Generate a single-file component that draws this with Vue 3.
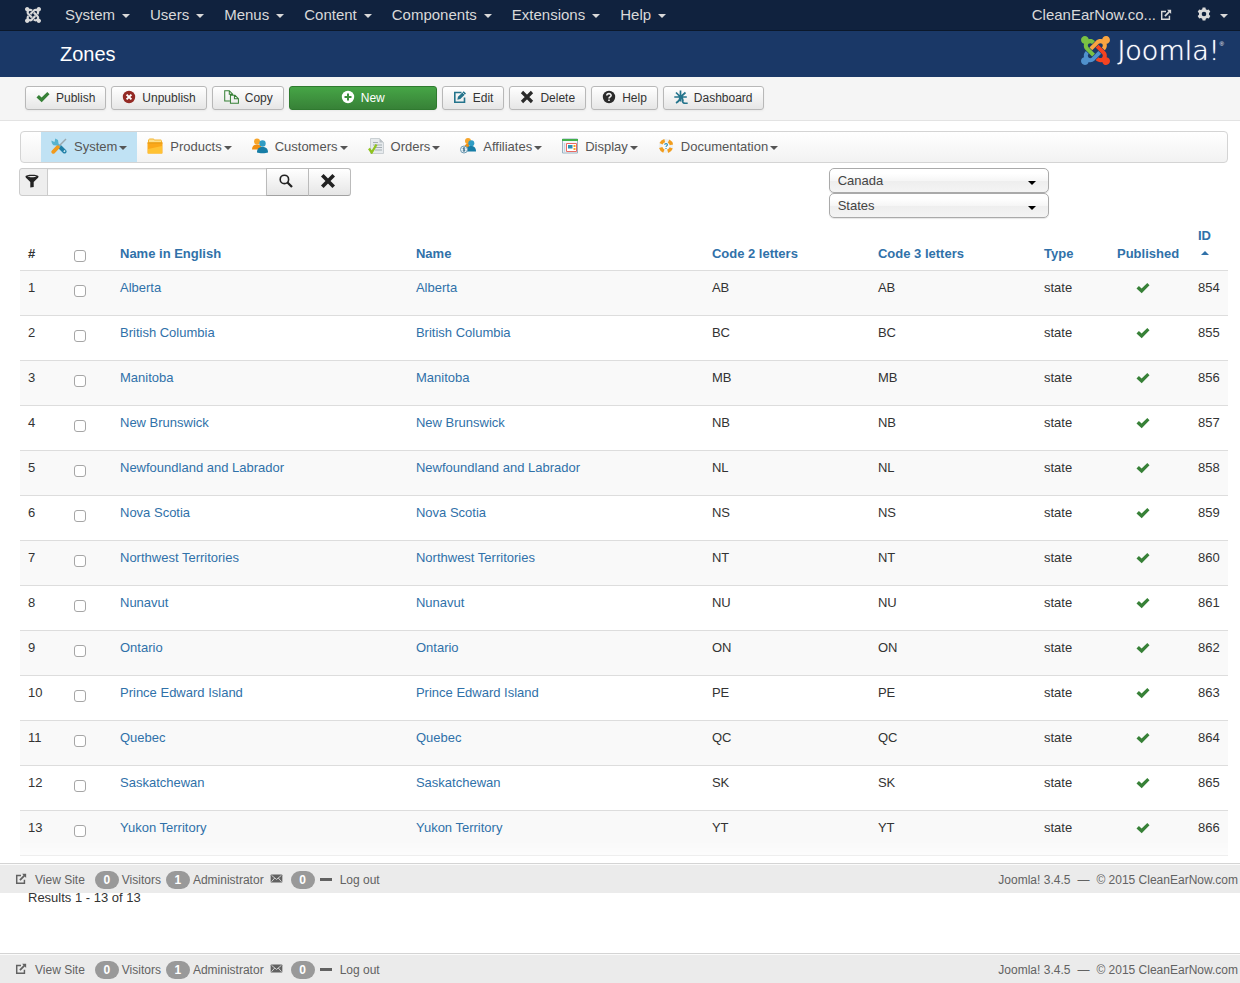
<script setup>
const menus = ['System', 'Users', 'Menus', 'Content', 'Components', 'Extensions', 'Help']

const tools = [
  { label: 'Publish', icon: 'check', tone: 'green' },
  { label: 'Unpublish', icon: 'unpublish', tone: 'red' },
  { label: 'Copy', icon: 'copy', tone: 'green', wide: true },
  { label: 'New', icon: 'plus', tone: 'white', primary: true },
  { label: 'Edit', icon: 'edit', tone: 'teal' },
  { label: 'Delete', icon: 'cross', tone: 'dark' },
  { label: 'Help', icon: 'help', tone: 'dark' },
  { label: 'Dashboard', icon: 'dashboard', tone: 'teal' },
]

const sections = [
  { label: 'System', icon: 'tools', active: true },
  { label: 'Products', icon: 'box' },
  { label: 'Customers', icon: 'people' },
  { label: 'Orders', icon: 'order' },
  { label: 'Affiliates', icon: 'affiliates' },
  { label: 'Display', icon: 'display' },
  { label: 'Documentation', icon: 'buoy' },
]

const zones = [
  ['Alberta', 'AB'],
  ['British Columbia', 'BC'],
  ['Manitoba', 'MB'],
  ['New Brunswick', 'NB'],
  ['Newfoundland and Labrador', 'NL'],
  ['Nova Scotia', 'NS'],
  ['Northwest Territories', 'NT'],
  ['Nunavut', 'NU'],
  ['Ontario', 'ON'],
  ['Prince Edward Island', 'PE'],
  ['Quebec', 'QC'],
  ['Saskatchewan', 'SK'],
  ['Yukon Territory', 'YT'],
].map(([name, code], i) => ({ name, code, id: 854 + i }))

const bars = ['middle', 'bottom']
</script>

<template>
  <div class="page">
    <svg class="sprite" aria-hidden="true">
      <symbol id="i-joomla" viewBox="0 32 448 448">
        <path class="j1" d="M.6 92.1C.6 58.8 27.4 32 60.4 32c30 0 54.5 21.9 59.2 50.2 32.6-7.6 67.1.6 96.5 30l-44.3 44.3c-20.5-20.5-42.6-16.3-55.4-3.5-14.3 14.3-14.3 37.9 0 52.2l99.5 99.5-44 44.3c-87.7-87.2-49.7-49.7-99.8-99.7-26.8-26.5-35-64.8-24.8-98.9C20.4 144.6.6 120.7.6 92.1z" />
        <path class="j2" d="M130.1 208.5l44.3 44.3c10-10 89.7-89.7 99.7-99.8 14.3-14.3 37.6-14.3 51.9 0 12.8 12.8 17 35-3.5 55.4l44 44.3c31.2-31.2 38.5-67.6 28.9-101.2 29.2-4.1 51.9-29.2 51.9-59.5 0-33.2-26.8-60.1-59.8-60.1-30.3 0-55.4 22.5-59.5 51.6-33.8-9.9-71.7-1.5-98.3 25.1-18.3 19.1-71.1 71.5-99.6 99.9z" />
        <path class="j3" d="M396.4 360.7c8.2-32.7-.9-68.5-26.3-93.9-11.8-12.2 5 4.7-99.5-99.7l-44.3 44.3 99.7 99.7c14.3 14.3 14.3 37.6 0 51.9-12.8 12.8-35 17-55.4-3.5l-44 44.3c27.6 30.2 68 38.8 102.7 28 5.5 27.4 29.7 48.1 58.9 48.1 33 0 59.8-26.8 59.8-60.1 0-30.2-22.5-55-51.6-59.1z" />
        <path class="j4" d="M312.1 307.6l-44-44.3c-87 86.4-50.4 50.4-99.7 99.8-14.3 14.3-37.6 14.3-51.9 0-13.1-13.4-16.9-35.3 3.2-55.4l-44-44.3c-30.2 30.2-38 65.2-29.5 98.3-26.7 6-46.2 29.9-46.2 58.2C0 453.2 26.8 480 59.8 480c28.6 0 52.5-19.8 58.6-46.7 32.7 8.2 68.5-.6 94.2-26 32.1-32 12.2-12.4 99.5-99.7z" />
      </symbol>
      <symbol id="i-check" viewBox="0 0 14 14">
        <path d="M.5 7.400L2.900 5l2.700 2.500L11.300 2 13.500 4.200 5.700 12.300z" fill="currentColor" />
      </symbol>
      <symbol id="i-unpublish" viewBox="0 0 14 14">
        <circle cx="7" cy="7" r="6.200" fill="currentColor" />
        <path d="M4.600 4.600l4.800 4.800M9.400 4.600L4.600 9.400" stroke="#fff" stroke-width="2" />
      </symbol>
      <symbol id="i-copy" viewBox="0 0 14 14">
        <path d="M6 10.500H1.500V1.500h4l3 3v1M5.500 1.500v3h3M6.500 12.500v-7h4l3 3v4zM10 5.500v3h3.500" fill="none" stroke="currentColor" stroke-width=".9" />
      </symbol>
      <symbol id="i-plus" viewBox="0 0 14 14">
        <circle cx="7" cy="7" r="6.200" fill="currentColor" />
        <path d="M7 3.500v7M3.500 7h7" stroke="#3c8f3c" stroke-width="2" />
      </symbol>
      <symbol id="i-edit" viewBox="0 0 14 14">
        <path d="M8.500 2.500H1.800v9.700h9.700V7.500" fill="none" stroke="currentColor" stroke-width="1.600" />
        <path d="M4.300 9.800l.7-3L10.700 1.200 13 3.400 7.300 9z" fill="currentColor" />
        <path d="M9.500 2.500l2.200 2.200" stroke="#fff" stroke-width=".7" />
      </symbol>
      <symbol id="i-cross" viewBox="0 0 14 14">
        <path d="M2 2l10 10M12 2L2 12" stroke="currentColor" stroke-width="3.200" />
      </symbol>
      <symbol id="i-help" viewBox="0 0 14 14">
        <circle cx="7" cy="7" r="6.200" fill="currentColor" />
        <path d="M4.800 5.500c.1-2.500 4.400-2.400 4.300 0C9.100 6.900 7 6.800 7 8.500M7 9.500v1.600" fill="none" stroke="#f3f3f3" stroke-width="1.600" />
      </symbol>
      <symbol id="i-dashboard" viewBox="0 0 14 14">
        <path d="M6.500 7V.5M6.500 7L2 2.500M6.500 7L11.500 2.500M.3 7h12.500M6.500 7c-.5 3-2 4.500-4.500 6M6.700 7v4.500M6.700 7c1.800 1 2.600 2.500 2 4.500-.3 1.800 2 2 5 1.800" fill="none" stroke="currentColor" stroke-width="1.700" />
      </symbol>
      <symbol id="i-out" viewBox="0 0 14 14">
        <path d="M7 3H2v9h9V8" fill="none" stroke="currentColor" stroke-width="1.700" />
        <path d="M8.300 1H13v4.700l-1.600-1.600L6.500 9 5 7.500l4.900-4.900z" fill="currentColor" />
      </symbol>
      <symbol id="i-gear" viewBox="0 0 14 14">
        <path d="M5.600.5h2.800l.4 1.800 1.300.7 1.700-.6 1.500 2.400-1.300 1.300v1.600l1.300 1.400-1.500 2.400-1.700-.6-1.300.8-.4 1.800H5.600l-.4-1.800-1.300-.8-1.700.6L.7 9.100 2 7.700V6.100L.7 4.800l1.500-2.400 1.700.6 1.300-.7zM7 4.700a2.300 2.300 0 100 4.600 2.300 2.300 0 000-4.600z" fill="currentColor" fill-rule="evenodd" />
      </symbol>
      <symbol id="i-filter" viewBox="0 0 14 14">
        <path d="M.5 2.500C.5.3 13.500.3 13.500 2.500c0 1-1 1.800-2 2.800L8.700 8v5L5.300 13.500V8L2.500 5.300c-1-1-2-1.800-2-2.800zM2.500 2.500c1.500 1 7.500 1 9 0-1.500-.8-7.500-.8-9 0z" fill="currentColor" fill-rule="evenodd" />
      </symbol>
      <symbol id="i-search" viewBox="0 0 14 14">
        <circle cx="5.400" cy="5.400" r="4.200" fill="none" stroke="currentColor" stroke-width="1.600" />
        <path d="M8.500 8.500L13 13" stroke="currentColor" stroke-width="2.300" />
      </symbol>
      <symbol id="i-mail" viewBox="0 0 14 10">
        <rect x=".5" y=".5" width="13" height="9" rx="1" fill="currentColor" />
        <path d="M1.500 1.500L7 6l5.500-4.500M1.500 8.500l3.500-4M12.500 8.500L9 4.500" fill="none" stroke="#ebebeb" stroke-width=".9" />
      </symbol>
      <symbol id="i-tools" viewBox="0 0 16 16">
        <path d="M9 9l4.500 4.500" stroke="#1f7fa6" stroke-width="4" stroke-linecap="round" />
        <path d="M.5 2.500L3.500 4 4.300.5 7 2l.5 3.500L10 8 8 10 5.500 7.500l-3-.3C1 6 .3 4 .5 2.500z" fill="#58b3cf" />
        <path d="M15 1L8.500 7.500" stroke="#9aa7ad" stroke-width="1.500" />
        <path d="M6.800 9.200L2.300 13.800" stroke="#f19a1c" stroke-width="3.800" stroke-linecap="round" />
        <path d="M12.800 13.800l1.300-1.300" stroke="#d8eef6" stroke-width="1.500" />
      </symbol>
      <symbol id="i-box" viewBox="0 0 16 16">
        <path d="M1 2L2.500.500h4l1 1h6.500l1 1.500v2H1z" fill="#f3b636" />
        <path d="M2 1.500h4.500l1 1h6.500v2H2z" fill="#ffe08a" />
        <path d="M.5 4.500h15v10.500q0 .5-.5.500H1q-.5 0-.5-.5z" fill="#fba81a" />
        <path d="M.5 4.500h15v1H.5z" fill="#e59a14" />
        <path d="M1 11l14-3v7.500H1z" fill="#ffc233" />
      </symbol>
      <symbol id="i-people" viewBox="0 0 16 16">
        <circle cx="5" cy="3.500" r="3" fill="#f7a52a" />
        <path d="M0 11.500C0 8 2 6.500 5 6.500s5 1.500 5 5z" fill="#f08f12" />
        <circle cx="10.500" cy="5.500" r="3.200" fill="#2f9cc4" />
        <path d="M5 14.500c0-4 2-5.500 5.500-5.500s5.500 1.500 5.500 5.500c-2 1-9 1-11 0z" fill="#167da6" />
      </symbol>
      <symbol id="i-order" viewBox="0 0 16 16">
        <path d="M2.500.5h9l4 4v11h-13z" fill="#e6eaed" stroke="#c0c6ca" stroke-width=".8" />
        <path d="M11.500.5v4h4z" fill="#b9c0c5" />
        <path d="M5 4.500h5M5 7h9M7 9.500h7M7 12h7" stroke="#a4adb3" stroke-width="1.100" />
        <path d="M1 10.500l2.700 4L8.500 6.500" fill="none" stroke="#8fc31f" stroke-width="2.300" />
      </symbol>
      <symbol id="i-affiliates" viewBox="0 0 16 16">
        <circle cx="8" cy="3" r="3" fill="#f7a52a" />
        <path d="M4.500 10C4.500 7 5.500 5.500 9 5.500v5z" fill="#f08f12" />
        <circle cx="11.300" cy="5.200" r="3" fill="#2f9cc4" />
        <path d="M6 13.500c0-4 2-5.500 5-5.500s5 1.500 5 5.500z" fill="#167da6" />
        <circle cx="4" cy="11.500" r="3.500" fill="#e8f1f6" stroke="#6d9ab2" />
        <path d="M5.200 10.200c-2.500-1-2.500 1-1.200 1.300s1.300 2-1.200 1.200M4 9.200v4.600" fill="none" stroke="#245a7a" stroke-width=".8" />
      </symbol>
      <symbol id="i-display" viewBox="0 0 16 16">
        <path d="M.5 1h15v14H.5z" fill="#f3f7fa" stroke="#9bb3c2" />
        <path d="M0 1h16v2H0z" fill="#42b04a" />
        <path d="M2.500 5v9" stroke="#c6d7e1" stroke-width="1.500" />
        <path d="M4.500 5.500h10v8h-10z" fill="#fff" stroke="#ea6a62" />
        <path d="M6 7h4.500v3.500H6z" fill="#2b8db5" />
        <path d="M11.500 7h2v2h-2zM11.500 10h2v2h-2z" fill="#f5a623" />
      </symbol>
      <symbol id="i-buoy" viewBox="0 0 16 16">
        <circle cx="8" cy="8" r="5.500" fill="none" stroke="#edf1f3" stroke-width="3.500" />
        <circle cx="8" cy="8" r="5.500" fill="none" stroke="#f29d1e" stroke-width="3.500" stroke-dasharray="4.640 4" stroke-dashoffset="-2" />
        <path d="M6.600 6.800c.2-1.700 2.900-1.500 2.800.1C9.300 8 8 7.800 8 9M8 10v1" fill="none" stroke="#2b8db5" stroke-width="1.100" />
      </symbol>
    </svg>

    <nav class="topbar" aria-label="Main">
      <a href="#" class="mark" aria-label="Joomla"><svg class="s16"><use href="#i-joomla" /></svg></a>
      <a v-for="m in menus" :key="m" href="#" class="top-item">{{ m }}<span class="caret"></span></a>
      <a href="#" class="site">CleanEarNow.co...<svg class="s12"><use href="#i-out" /></svg></a>
      <a href="#" class="gear" aria-label="Settings"><svg class="s14"><use href="#i-gear" /></svg><span class="caret"></span></a>
    </nav>

    <header class="header">
      <h1>Zones</h1>
      <div class="logo">
        <svg class="logo-mark"><use href="#i-joomla" /></svg>
        <span class="logo-text">Joomla!</span><span class="reg">®</span>
      </div>
    </header>

    <div class="toolbar">
      <button v-for="t in tools" :key="t.label" type="button" class="btn" :class="{ primary: t.primary }">
        <svg :class="[t.tone, t.wide ? 's16' : 's14']"><use :href="'#i-' + t.icon" /></svg>{{ t.label }}
      </button>
    </div>

    <main class="content">
      <nav class="submenu" aria-label="Shop">
        <a v-for="s in sections" :key="s.label" href="#" class="sub-item" :class="{ active: s.active }">
          <svg class="s16"><use :href="'#i-' + s.icon" /></svg>{{ s.label }}<span class="caret"></span>
        </a>
      </nav>

      <div class="filters">
        <form class="search" @submit.prevent>
          <label for="filter" class="addon" aria-label="Filter"><svg class="s14"><use href="#i-filter" /></svg></label>
          <input id="filter" type="text" />
          <button type="submit" aria-label="Search"><svg class="s14"><use href="#i-search" /></svg></button>
          <button type="button" aria-label="Clear"><svg class="s16"><use href="#i-cross" /></svg></button>
        </form>
        <div class="selects">
          <div class="select"><select aria-label="Country"><option>Canada</option></select></div>
          <div class="select"><select aria-label="Zone type"><option>States</option></select></div>
        </div>
      </div>

      <table>
        <colgroup>
          <col class="c-num" /><col class="c-check" /><col class="c-name" /><col class="c-name" />
          <col /><col /><col class="c-type" /><col class="c-pub" /><col class="c-id" />
        </colgroup>
        <thead>
          <tr>
            <th class="num">#</th>
            <th><input type="checkbox" aria-label="Select all" /></th>
            <th><a href="#">Name in English</a></th>
            <th><a href="#">Name</a></th>
            <th><a href="#">Code 2 letters</a></th>
            <th><a href="#">Code 3 letters</a></th>
            <th><a href="#">Type</a></th>
            <th><a href="#">Published</a></th>
            <th class="id"><a href="#">ID<span class="sort"></span></a></th>
          </tr>
        </thead>
        <tbody>
          <tr v-for="(z, i) in zones" :key="z.id">
            <td class="num">{{ i + 1 }}</td>
            <td><input type="checkbox" :aria-label="'Select ' + z.name" /></td>
            <td><a href="#">{{ z.name }}</a></td>
            <td><a href="#">{{ z.name }}</a></td>
            <td>{{ z.code }}</td>
            <td>{{ z.code }}</td>
            <td>state</td>
            <td class="pub"><button type="button" aria-label="Published"><svg class="s14 green"><use href="#i-check" /></svg></button></td>
            <td class="id">{{ z.id }}</td>
          </tr>
        </tbody>
      </table>
    </main>

    <template v-for="b in bars" :key="b">
      <footer class="status" :class="b">
        <a href="#" class="view"><svg class="s12"><use href="#i-out" /></svg>View Site</a>
        <span class="badge">0</span><span>Visitors</span>
        <span class="badge second">1</span><span>Administrator</span>
        <svg class="mail"><use href="#i-mail" /></svg>
        <span class="badge third">0</span>
        <span class="dash"></span>
        <a href="#">Log out</a>
        <span class="copyright"><span>Joomla! 3.4.5</span><span>—</span><span>© 2015 CleanEarNow.com</span></span>
      </footer>
      <p v-if="b === 'middle'" class="results">Results 1 - 13 of 13</p>
    </template>
  </div>
</template>

<style>
body {
  margin: 0;
  background: #fff;
}
</style>

<style scoped>
* {
  box-sizing: border-box;
}
.page {
  display: flex;
  flex-direction: column;
  min-height: 100vh;
  font: 13px/18px "Liberation Sans", Arial, sans-serif;
  color: #333;
}
.sprite {
  position: absolute;
  width: 0;
  height: 0;
}
a {
  color: #3071a9;
  text-decoration: none;
}
svg {
  flex: none;
}
.s12 { width: 12px; height: 12px; }
.s14 { width: 14px; height: 14px; }
.s16 { width: 16px; height: 16px; }
.green { color: #378137; }
.red { color: #942a25; }
.teal { color: #24748c; }
.dark { color: #2b2b2b; }
.white { color: #fff; }

.j1 { fill: var(--j1, inherit); }
.j2 { fill: var(--j2, inherit); }
.j3 { fill: var(--j3, inherit); }
.j4 { fill: var(--j4, inherit); }

.caret {
  display: inline-block;
  border: 4px solid transparent;
  border-top-color: currentColor;
  border-bottom: 0;
}

.topbar {
  display: flex;
  align-items: center;
  height: 31px;
  padding: 0 12px 0 25px;
  background: #10223e;
  border-bottom: 1px solid #0b182b;
  font-size: 15px;
}
.topbar a {
  display: flex;
  align-items: center;
  color: #d9d9d9;
}
.mark {
  margin-right: 24px;
}
.top-item {
  gap: 7px;
  margin-right: 20px;
}
.topbar .caret {
  margin-top: 2px;
}
.site {
  gap: 4px;
  margin-left: auto;
}
.gear {
  gap: 9px;
  margin-left: 25px;
}
.gear svg {
  margin-bottom: 3px;
}
.mark svg {
  fill: #d9d9d9;
}

.header {
  display: flex;
  align-items: center;
  justify-content: space-between;
  height: 46px;
  padding: 0 16px 0 60px;
  background: #1a3867;
  color: #fff;
}
h1 {
  margin: 0;
  font-size: 20px;
  font-weight: 400;
  line-height: 24px;
}
.logo {
  display: flex;
  align-items: center;
  padding-bottom: 8px;
}
.logo-mark {
  --j1: #7ac143;
  --j2: #f9a541;
  --j3: #f44321;
  --j4: #5091cd;
  width: 29px;
  height: 29px;
  margin-right: 7px;
}
.logo-text {
  font: 200 27px/29px "DejaVu Sans", sans-serif;
  text-shadow: 0 0 1px #fff;
}
.reg {
  align-self: flex-start;
  font-size: 6px;
  line-height: 16px;
}

.toolbar {
  display: flex;
  flex-wrap: wrap;
  gap: 5px;
  padding: 9px 25px 10px;
  background: #f5f5f5;
  border-bottom: 1px solid #e3e3e3;
}
.btn {
  display: flex;
  align-items: center;
  gap: 6px;
  height: 24px;
  padding: 0 10px;
  border: 1px solid #b8b8b8;
  border-radius: 3px;
  background: linear-gradient(#fff, #e6e6e6);
  box-shadow: 0 1px 2px rgba(0, 0, 0, 0.05);
  color: #333;
  font: 12px/22px "Liberation Sans", Arial, sans-serif;
}
.btn svg {
  margin-bottom: 2px;
}
.primary {
  justify-content: center;
  width: 148px;
  border-color: #2f7a2f;
  background: linear-gradient(#46a546, #378137);
  color: #fff;
}

.content {
  padding: 10px 12px 0 20px;
}
.submenu {
  display: flex;
  height: 32px;
  padding-left: 20px;
  border: 1px solid #d4d4d4;
  border-radius: 4px;
  background: linear-gradient(#fff, #f2f2f2);
}
.sub-item {
  display: flex;
  align-items: center;
  padding: 0 10px;
  color: #555;
}
.sub-item svg {
  margin: 0 7px 2px 0;
}
.sub-item .caret {
  margin: 2px 0 0 2px;
}
.active {
  background: #c0e2f4;
}

.filters {
  display: grid;
  grid-template-columns: 2fr 1fr;
  column-gap: 10px;
  padding-top: 5px;
}
.search {
  display: flex;
  height: 28px;
  margin-left: -1px;
  max-width: 332px;
}
.addon,
.search button {
  display: flex;
  align-items: center;
  justify-content: center;
  flex: none;
  border: 1px solid #bbb;
  color: #222;
}
.addon {
  width: 29px;
  padding: 0 3px 2px 0;
  border-color: #ccc;
  border-radius: 3px 0 0 3px;
  background: #eee;
}
.search input {
  flex: 1;
  min-width: 0;
  margin-left: -1px;
  padding: 4px 6px;
  border: 1px solid #ccc;
  border-radius: 0;
  font: inherit;
  box-shadow: inset 0 1px 1px rgba(0, 0, 0, 0.075);
}
.search button {
  width: 43px;
  margin-left: -1px;
  padding: 0 4px 3px 0;
  background: linear-gradient(#fff, #e6e6e6);
  border-bottom-color: #a2a2a2;
}
.search button:last-child {
  border-radius: 0 3px 3px 0;
}
.selects {
  width: 220px;
}
.select {
  position: relative;
}
.select::after {
  content: "";
  position: absolute;
  right: 13px;
  top: 13px;
  border: 4px solid transparent;
  border-top-color: #000;
  border-bottom: 0;
  pointer-events: none;
}
select {
  display: block;
  width: 100%;
  height: 25px;
  padding: 0 8px;
  appearance: none;
  border: 1px solid #aaa;
  border-radius: 5px;
  background: linear-gradient(#fff 20%, #f6f6f6 50%, #eee 52%, #f4f4f4);
  box-shadow: 0 1px 1px rgba(0, 0, 0, 0.1);
  color: #444;
  font: 13px/23px "Liberation Sans", Arial, sans-serif;
}

table {
  width: 100%;
  table-layout: fixed;
  border-collapse: collapse;
  border-bottom: 1px solid #ddd;
}
.c-num { width: 28px; }
.c-check { width: 64px; }
.c-name { width: 24.5%; }
.c-type { width: 73px; }
.c-pub { width: 77px; }
.c-id { width: 42px; }
th,
td {
  padding: 8px;
  text-align: left;
  vertical-align: top;
}
th {
  padding: 9px 8px 7px;
  vertical-align: bottom;
}
td {
  height: 45px;
  border-top: 1px solid #ddd;
}
tbody tr:nth-child(odd) {
  background: #f9f9f9;
}
.num {
  padding-right: 0;
}
.id {
  padding-left: 12px;
  padding-right: 0;
}
.sort {
  display: block;
  width: 8px;
  margin: 6px 0 8px 3px;
  border: 4px solid transparent;
  border-bottom-color: currentColor;
  border-top: 0;
}
.pub {
  text-align: center;
}
.pub button {
  display: block;
  margin: 2px auto 0 19px;
  padding: 0;
  border: 0;
  background: none;
}
.pub svg {
  display: block;
}
input[type="checkbox"] {
  display: block;
  width: 12px;
  height: 12px;
  margin: 6px auto 0;
  appearance: none;
  border: 1px solid #a6a6a6;
  border-radius: 3px;
  background: #fff;
}
th input[type="checkbox"] {
  margin-bottom: 1px;
}

.status {
  position: relative;
  display: flex;
  align-items: center;
  height: 30px;
  padding: 3px 2px 0 15px;
  background: #ebebeb;
  border-top: 1px solid #d4d4d4;
  box-shadow: inset 0 1px 0 rgba(255, 255, 255, 0.8), 0 -15px 15px rgba(255, 255, 255, 0.6);
  color: #626262;
  font-size: 12px;
  white-space: nowrap;
}
.status a {
  color: #626262;
}
.middle {
  margin-top: 7px;
}
.bottom {
  margin-top: auto;
}
.view {
  display: flex;
  align-items: center;
  gap: 8px;
  margin-right: 10px;
}
.view svg {
  margin-bottom: 2px;
}
.badge {
  width: 24px;
  height: 18px;
  margin-right: 3px;
  border-radius: 9px;
  background: #999;
  color: #fff;
  font-weight: 700;
  line-height: 18px;
  text-align: center;
}
.second {
  margin-left: 5px;
}
.third {
  margin: 0 5px 0 8px;
}
.mail {
  width: 13px;
  height: 9px;
  margin: 0 0 3px 6px;
}
.dash {
  width: 12px;
  height: 3px;
  margin: 0 8px 2px 0;
  background: #626262;
}
.copyright {
  display: flex;
  gap: 7px;
  margin-left: auto;
}
.results {
  margin: -4px 0 0;
  padding: 0 28px;
}
</style>
